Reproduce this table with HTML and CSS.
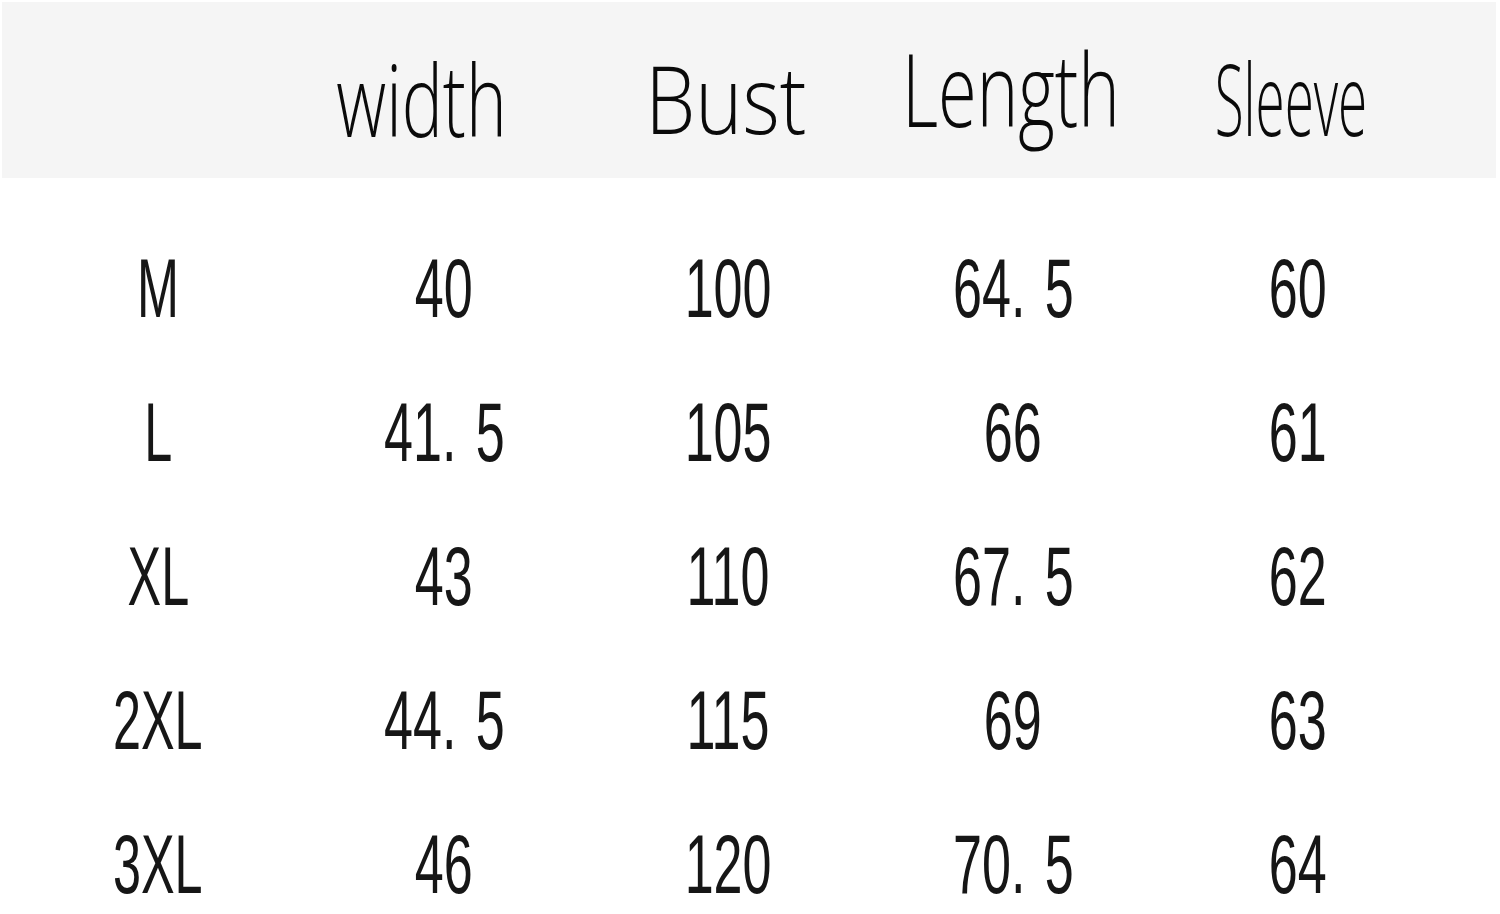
FILE: index.html
```html
<!DOCTYPE html>
<html>
<head>
<meta charset="utf-8">
<link rel="stylesheet" href="styles.css">
</head>
<body>
<div class="chart">
  <div class="head">
    <div class="hc"></div>
    <div class="hc hc-width"><span class="ht ht-width">width</span></div>
    <div class="hc hc-bust"><span class="ht ht-bust">Bust</span></div>
    <div class="hc hc-length"><span class="ht ht-length">Length</span></div>
    <div class="hc hc-sleeve"><span class="ht ht-sleeve">Sleeve</span></div>
  </div>
  <div class="rows">
    <div class="row"><div class="c size"><span class="t">M</span></div><div class="c"><span class="t">40</span></div><div class="c"><span class="t">100</span></div><div class="c"><span class="t">64. 5</span></div><div class="c"><span class="t">60</span></div></div>
    <div class="row"><div class="c size"><span class="t">L</span></div><div class="c"><span class="t">41. 5</span></div><div class="c"><span class="t">105</span></div><div class="c"><span class="t">66</span></div><div class="c"><span class="t">61</span></div></div>
    <div class="row"><div class="c size"><span class="t">XL</span></div><div class="c"><span class="t">43</span></div><div class="c"><span class="t">110</span></div><div class="c"><span class="t">67. 5</span></div><div class="c"><span class="t">62</span></div></div>
    <div class="row"><div class="c size"><span class="t">2XL</span></div><div class="c"><span class="t">44. 5</span></div><div class="c"><span class="t">115</span></div><div class="c"><span class="t">69</span></div><div class="c"><span class="t">63</span></div></div>
    <div class="row"><div class="c size"><span class="t">3XL</span></div><div class="c"><span class="t">46</span></div><div class="c"><span class="t">120</span></div><div class="c"><span class="t">70. 5</span></div><div class="c"><span class="t">64</span></div></div>
  </div>
</div>
</body>
</html>
```
FILE: styles.css
```css
html, body {
  margin: 0;
  padding: 0;
  background: #ffffff;
}
.chart {
  width: 1500px;
  height: 914px;
  overflow: hidden;
  color: #111111;
}
.head {
  margin: 2px 4px 0 2px;
  height: 176px;
  background: #f5f5f5;
  display: grid;
  grid-template-columns: 314px 210px 400px 170px 390px 1fr;
}
.hc {
  display: flex;
  justify-content: center;
  align-items: flex-start;
  white-space: nowrap;
  font-family: "Open Sans", sans-serif;
  font-weight: 300;
  line-height: 1;
  color: #0a0a0a;
}
.ht {
  display: inline-block;
  transform-origin: center;
}
.hc-width { font-size: 100px; padding-top: 46px; }
.ht-width { transform: scaleX(0.69); }
.hc-bust { font-size: 94px; padding-top: 49px; }
.ht-bust { transform: scaleX(0.85); }
.hc-length { font-size: 102px; padding-top: 35px; }
.ht-length { transform: scaleX(0.69); }
.hc-sleeve { font-size: 100px; padding-top: 45px; }
.ht-sleeve { transform: scaleX(0.53); }
.rows {
  padding-top: 38px;
}
.row {
  display: grid;
  grid-template-columns: 316px 256px 312px 258px 312px;
  height: 144px;
}
.c {
  display: flex;
  justify-content: center;
  white-space: nowrap;
  font-family: "Liberation Sans", Arial, sans-serif;
  font-size: 84px;
  line-height: 144px;
  height: 144px;
  color: #161616;
  word-spacing: 8px;
}
.t {
  display: inline-block;
  transform: scaleX(0.62);
  transform-origin: center;
}
.size .t {
  transform: scaleX(0.6);
}
```
